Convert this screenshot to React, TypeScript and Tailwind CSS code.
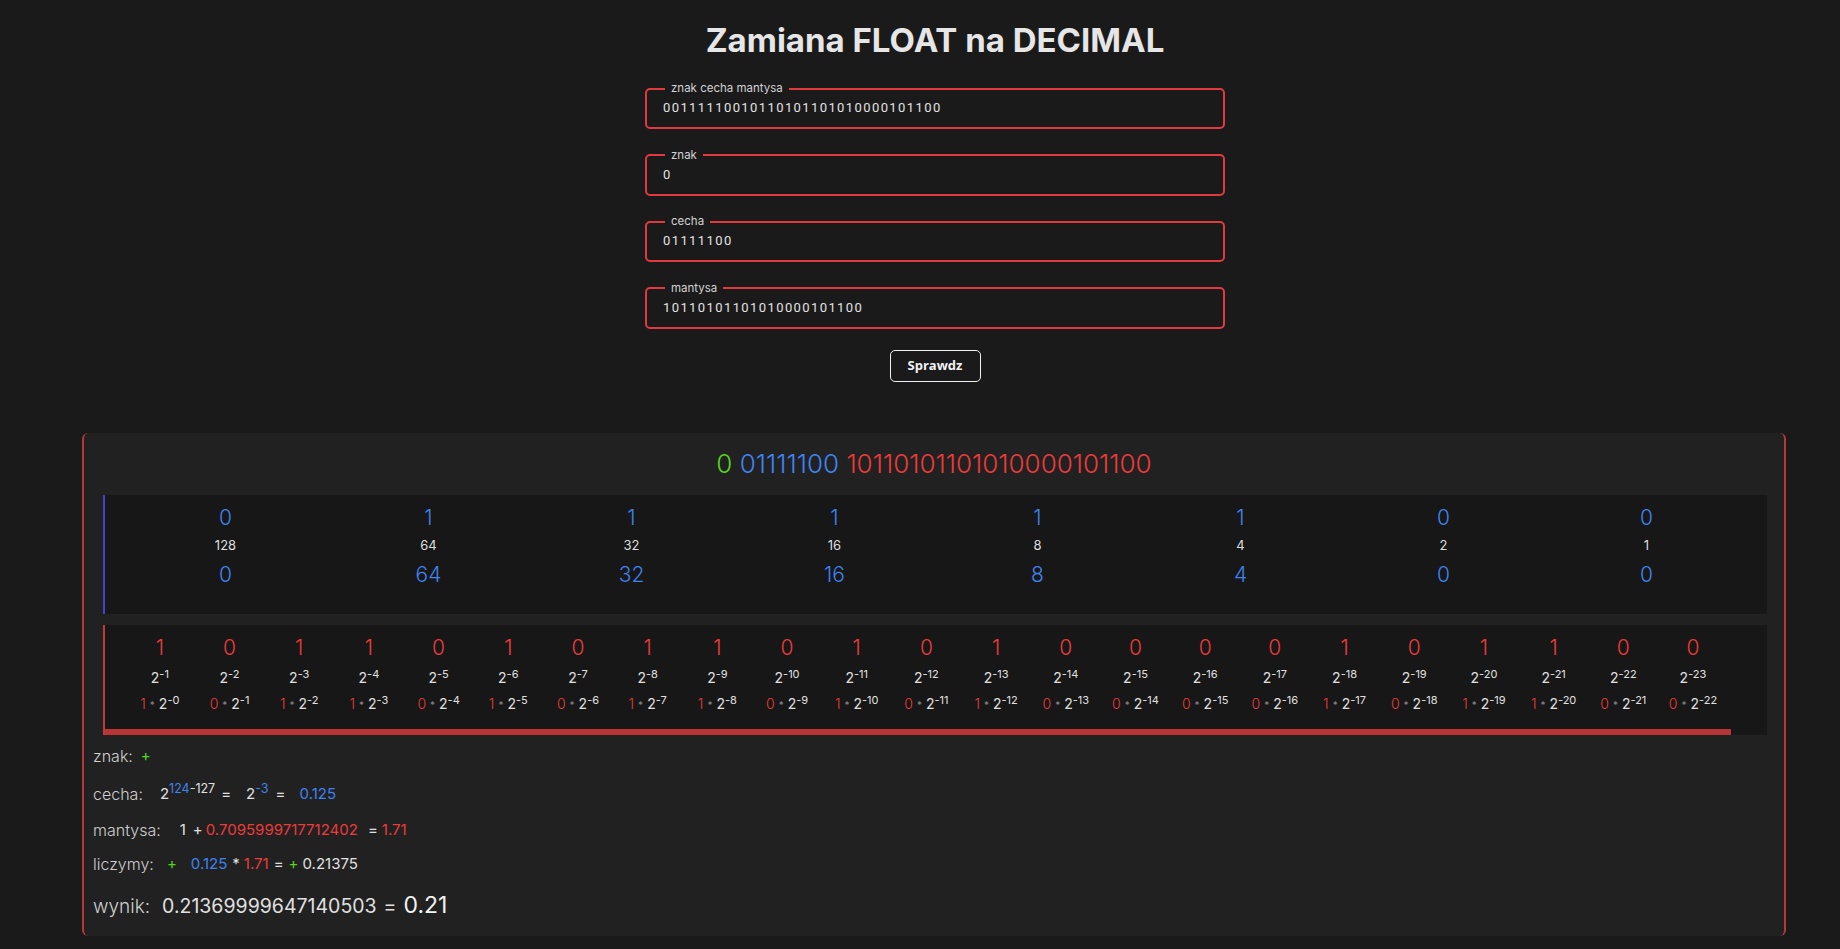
import React from "react";

const EXP = "01111100";
const MAN = "10110101101010000101100";
const W = [128, 64, 32, 16, 8, 4, 2, 1];

const RED = "text-[#ec3b3b]";
const BLUE = "text-[#3f83f0]";
const GREEN = "text-[#55d420]";

function Field({ label, value }: { label: string; value: string }) {
  return (
    <fieldset className="border-2 border-[#e0393e] rounded-[5px] pl-[16px] pr-[16px] pb-[7px]">
      <legend className="ml-[2px] px-[6px] text-[11.5px] leading-[13px] text-[#d2d2d2] font-['Inter',sans-serif]">
        {label}
      </legend>
      <input
        readOnly
        value={value}
        className="block w-full h-[25px] p-0 bg-transparent outline-none font-['Roboto',sans-serif] text-[13px] tracking-[1.4px] text-[#e2e2e2]"
      />
    </fieldset>
  );
}

export default function App() {
  return (
    <div className="min-h-screen w-full bg-[#1a1a1a] pl-[30px] pb-[14px] text-[#e0e0e0] font-['Inter',sans-serif]">
      <h1 className="pt-[20px] text-center text-[33px] leading-[40px] font-bold text-[#e6e6e6]">
        Zamiana FLOAT na DECIMAL
      </h1>

      <div className="w-[580px] mx-auto mt-[22px] flex flex-col gap-[19.5px]">
        <Field label="znak cecha mantysa" value={"0" + EXP + MAN} />
        <Field label="znak" value="0" />
        <Field label="cecha" value={EXP} />
        <Field label="mantysa" value={MAN} />
      </div>

      <button className="block mx-auto mt-[21px] w-[91px] h-[32px] border-[1.5px] border-[#f0f0f0] rounded-[5px] text-[13px] font-bold text-[#f2f2f2] font-['Open_Sans',sans-serif]">
        Sprawdz
      </button>

      <div className="mt-[51px] ml-[52px] mr-[54px] bg-[#212121] border-x-2 border-[#b5393b] rounded-[6px]">
        <div className="h-[62px] flex items-center justify-center text-[26px] font-light">
          <span className="whitespace-pre">
            <span className={GREEN}>0</span>
            {" "}
            <span className={BLUE}>{EXP}</span>
            {" "}
            <span className={RED}>{MAN}</span>
          </span>
        </div>

        <div className="ml-[19px] mr-[17px] bg-[#171717] border-l-2 border-[#4a3fd0] grid grid-cols-8 px-[19px] pt-[9.5px] pb-[24.5px]">
          {EXP.split("").map((b, i) => (
            <div key={i} className="flex flex-col items-center">
              <div className={`text-[21px] leading-[28px] font-light ${BLUE}`}>{b}</div>
              <div className="mt-[3px] text-[13px] leading-[20px] text-[#dedede]">{W[i]}</div>
              <div className={`mt-[6px] text-[21px] leading-[28px] font-light ${BLUE}`}>
                {Number(b) * W[i]}
              </div>
            </div>
          ))}
        </div>

        <div className="mt-[11px] ml-[19px] mr-[17px] bg-[#171717] border-l-2 border-[#c0393b]">
          <div className="w-max flex border-b-[6px] border-[#b83535] pl-[20px] pr-[3px] pt-[9px] pb-[14px]">
            {MAN.split("").map((b, i) => (
              <div key={i} className="w-[69.7px] flex flex-col items-center">
                <div className={`text-[21px] leading-[28px] font-light ${RED}`}>{b}</div>
                <div className="mt-[4px] h-[24px] flex items-center text-[14px] text-[#e0e0e0]">
                  <span>
                    2<sup className="text-[11px]">-{i + 1}</sup>
                  </span>
                </div>
                <div className="mt-[3px] h-[22px] flex items-center text-[14px]">
                  <span>
                    <span className={`font-light ${RED}`}>{b}</span>
                    <span className="mx-[4px] text-[10px] text-[#8a8a8a]">*</span>
                    <span className="text-[#e0e0e0]">
                      2<sup className="text-[11px]">-{i}</sup>
                    </span>
                  </span>
                </div>
              </div>
            ))}
          </div>
        </div>

        <div className="px-[9px] pt-[2.5px] pb-[5.5px] text-[15px] text-[#e0e0e0]">
          <div className="h-[38px] flex items-center">
            <span className="text-[16px] font-light text-[#cfcfcf]">znak:</span>
            <span className={`ml-[8px] ${GREEN}`}>+</span>
          </div>
          <div className="h-[38px] flex items-center">
            <span className="text-[16px] font-light text-[#cfcfcf]">cecha:</span>
            <span className="ml-[17px]">
              2<sup className="text-[12.5px]"><span className={BLUE}>124</span>-127</sup>
            </span>
            <span className="ml-[6px]">=</span>
            <span className="ml-[15px]">
              2<sup className={`text-[12.5px] ${BLUE}`}>-3</sup>
            </span>
            <span className="ml-[7px]">=</span>
            <span className={`ml-[14px] ${BLUE}`}>0.125</span>
          </div>
          <div className="h-[34px] flex items-center">
            <span className="text-[16px] font-light text-[#cfcfcf]">mantysa:</span>
            <span className="ml-[19px]">1</span>
            <span className="ml-[7px]">+</span>
            <span className={`ml-[3px] ${RED}`}>0.7095999717712402</span>
            <span className="ml-[10px]">=</span>
            <span className={`ml-[4px] ${RED}`}>1.71</span>
          </div>
          <div className="h-[34px] flex items-center">
            <span className="text-[16px] font-light text-[#cfcfcf]">liczymy:</span>
            <span className={`ml-[13px] ${GREEN}`}>+</span>
            <span className={`ml-[14px] ${BLUE}`}>0.125</span>
            <span className="ml-[5px]">*</span>
            <span className={`ml-[4px] ${RED}`}>1.71</span>
            <span className="ml-[5px]">=</span>
            <span className={`ml-[5px] ${GREEN}`}>+</span>
            <span className="ml-[4px]">0.21375</span>
          </div>
          <div className="h-[49px] flex items-center">
            <span className="flex items-baseline">
              <span className="text-[19px] font-light text-[#cfcfcf]">wynik:</span>
              <span className="ml-[12px] text-[19.5px]">0.21369999647140503</span>
              <span className="ml-[7px] text-[19.5px]">=</span>
              <span className="ml-[7px] text-[23px] text-[#f2f2f2]">0.21</span>
            </span>
          </div>
        </div>
      </div>
    </div>
  );
}
